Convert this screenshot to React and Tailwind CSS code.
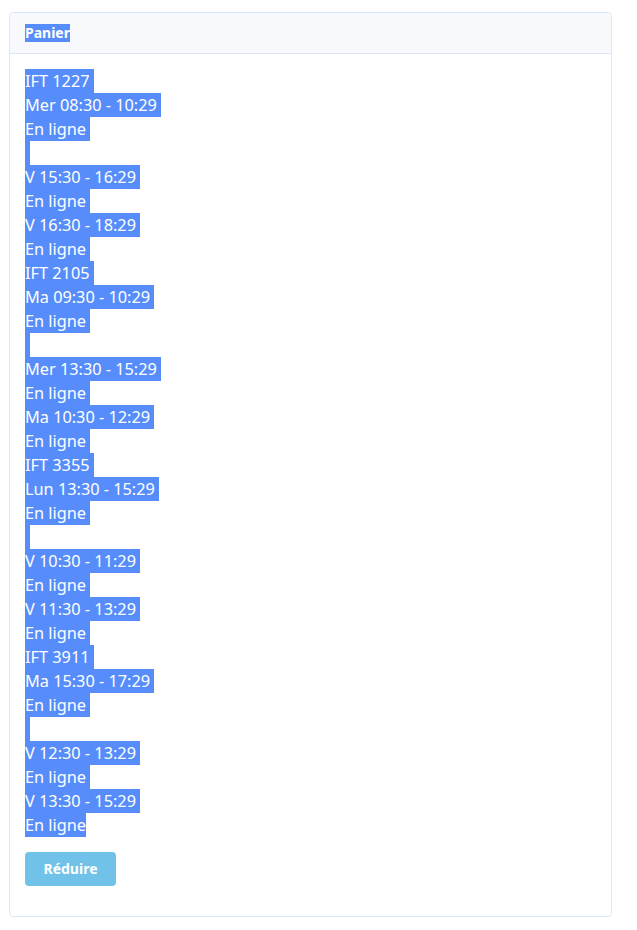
const courses = [
  {
    code: "IFT 1227",
    main: "Mer 08:30 - 10:29",
    extra: ["V 15:30 - 16:29", "V 16:30 - 18:29"],
  },
  {
    code: "IFT 2105",
    main: "Ma 09:30 - 10:29",
    extra: ["Mer 13:30 - 15:29", "Ma 10:30 - 12:29"],
  },
  {
    code: "IFT 3355",
    main: "Lun 13:30 - 15:29",
    extra: ["V 10:30 - 11:29", "V 11:30 - 13:29"],
  },
  {
    code: "IFT 3911",
    main: "Ma 15:30 - 17:29",
    extra: ["V 12:30 - 13:29", "V 13:30 - 15:29"],
  },
];

function Line({ children, last }) {
  return (
    <div className="h-6 leading-6">
      <span className={`inline-block h-6 bg-[#578dfb] text-white ${last ? "" : "pr-[4px]"}`}>
        {children}
      </span>
    </div>
  );
}

function Blank() {
  return (
    <div className="h-6">
      <span className="inline-block h-6 w-[5px] bg-[#578dfb]" />
    </div>
  );
}

export default function App() {
  return (
    <div className="min-h-screen bg-white pt-3 pl-[9px] font-['Noto_Sans',sans-serif]">
      <div className="w-[603px] h-[905px] border border-[#d8eaf9] rounded-[4px] flex flex-col">
        {/* Header */}
        <div className="h-[41px] flex items-center bg-[#f7f9fc] border-b border-[#d8eaf9] px-[15px] rounded-t-[4px]">
          <span className="inline-block bg-[#578dfb] text-white text-sm font-bold leading-[18px]">
            Panier
          </span>
        </div>

        {/* Body */}
        <div className="px-[15px] pt-[15px] text-[16.3px]">
          {courses.map((c, i) => (
            <div key={c.code}>
              <Line>{c.code}</Line>
              <Line>{c.main}</Line>
              <Line>En ligne</Line>
              <Blank />
              {c.extra.map((slot, j) => (
                <div key={slot}>
                  <Line>{slot}</Line>
                  <Line last={i === courses.length - 1 && j === c.extra.length - 1}>
                    En ligne
                  </Line>
                </div>
              ))}
            </div>
          ))}

          <button className="mt-[15px] h-[34px] w-[91px] rounded-[4px] bg-[#71c2e9] text-white text-sm font-bold">
            Réduire
          </button>
        </div>
      </div>
    </div>
  );
}
